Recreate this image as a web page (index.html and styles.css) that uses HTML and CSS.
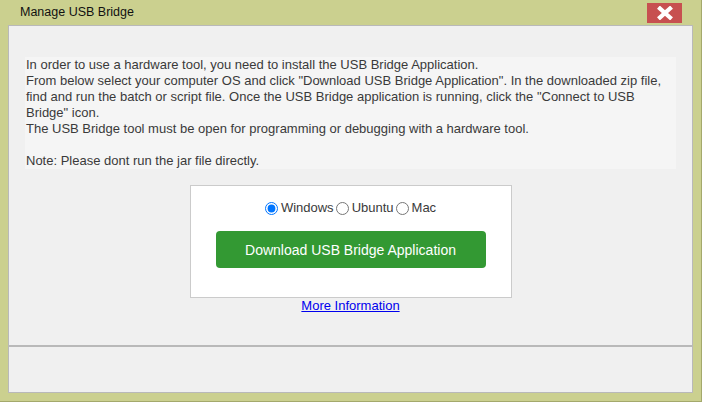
FILE: index.html
```html
<!DOCTYPE html>
<html lang="en">
<head>
  <meta charset="UTF-8">
  <meta name="viewport" content="width=device-width, initial-scale=1.0">
  <title>Manage USB Bridge</title>
  <link rel="stylesheet" href="styles.css">
</head>
<body>
  <!-- Dialog -->
  <div class="dialog">
    <div class="titlebar">
      <span class="title">Manage USB Bridge</span>
      <button class="close" type="button" aria-label="Close">
        <svg width="16" height="14" viewBox="0 0 16 14">
          <path d="M3 2.5 L13 11.5 M13 2.5 L3 11.5" stroke="#fff" stroke-width="4.2" stroke-linecap="square"/>
        </svg>
      </button>
    </div>

    <div class="panel">
      <div class="content">
        <div class="info">
          In order to use a hardware tool, you need to install the USB Bridge Application.<br>
          From below select your computer OS and click "Download USB Bridge Application". In the downloaded zip file, find and run the batch or script file. Once the USB Bridge application is running, click the "Connect to USB Bridge" icon.<br>
          The USB Bridge tool must be open for programming or debugging with a hardware tool.<br>
          <br>
          Note: Please dont run the jar file directly.
        </div>

        <div class="download">
          <div class="os-select">
            <label><input type="radio" name="os" value="windows" checked>Windows</label>
            <label><input type="radio" name="os" value="ubuntu">Ubuntu</label>
            <label><input type="radio" name="os" value="mac">Mac</label>
          </div>
          <button class="button" type="button">Download USB Bridge Application</button>
        </div>
        <a class="more" href="#">More Information</a>
      </div>
      <div class="footer"></div>
    </div>
  </div>
</body>
</html>
```

FILE: styles.css
```css
body {
  margin: 0;
  padding: 0;
  font-family: "Liberation Sans", Arial, sans-serif;
  color: #3a3a3a;
}

.dialog {
  width: 702px;
  height: 402px;
  box-sizing: border-box;
  background: #cbd08f;
  border-right: 1px solid #a4a96c;
  border-bottom: 1px solid #a4a96c;
  display: flex;
  flex-direction: column;
}

.titlebar {
  height: 25px;
  flex: none;
  display: flex;
  justify-content: space-between;
  padding: 0 19px 0 20px;
}

.title {
  font-size: 12.5px;
  color: #111;
  line-height: 25px;
}

.close {
  margin-top: 3px;
  width: 35px;
  height: 20px;
  border: none;
  padding: 0;
  background: #c75050;
  display: flex;
  align-items: center;
  justify-content: center;
  cursor: pointer;
}

.panel {
  flex: 1;
  margin: 0 8px 8px 8px;
  border: 1px solid #b9b9b9;
  background: #f0f0f0;
  display: flex;
  flex-direction: column;
}

.content {
  flex: 1;
  padding: 31px 16px 0 16px;
  display: flex;
  flex-direction: column;
  align-items: center;
}

.info {
  align-self: stretch;
  background: #f5f5f5;
  font-size: 13px;
  line-height: 16px;
  padding-left: 1px;
}

.download {
  margin-top: 16px;
  width: 322px;
  height: 113px;
  box-sizing: border-box;
  background: #fff;
  border: 1px solid #cbcbcb;
  display: flex;
  flex-direction: column;
  align-items: center;
}

.os-select {
  margin-top: 14px;
  font-size: 13px;
  line-height: 16px;
  display: flex;
  gap: 2px;
}

.os-select label {
  display: flex;
  align-items: center;
}

.os-select input {
  margin: 0 3px 0 0;
  width: 13px;
  height: 13px;
}

.button {
  margin-top: 15px;
  width: 270px;
  height: 37px;
  font-family: "Liberation Sans", Arial, sans-serif;
  font-size: 14px;
  color: #fff;
  background: #339933;
  border: none;
  border-radius: 4px;
  cursor: pointer;
}

.more {
  margin-top: 0;
  font-size: 13px;
  line-height: 16px;
  color: #0000ee;
}

.footer {
  height: 45px;
  flex: none;
  border-top: 2px solid #b9b9b9;
}
```
